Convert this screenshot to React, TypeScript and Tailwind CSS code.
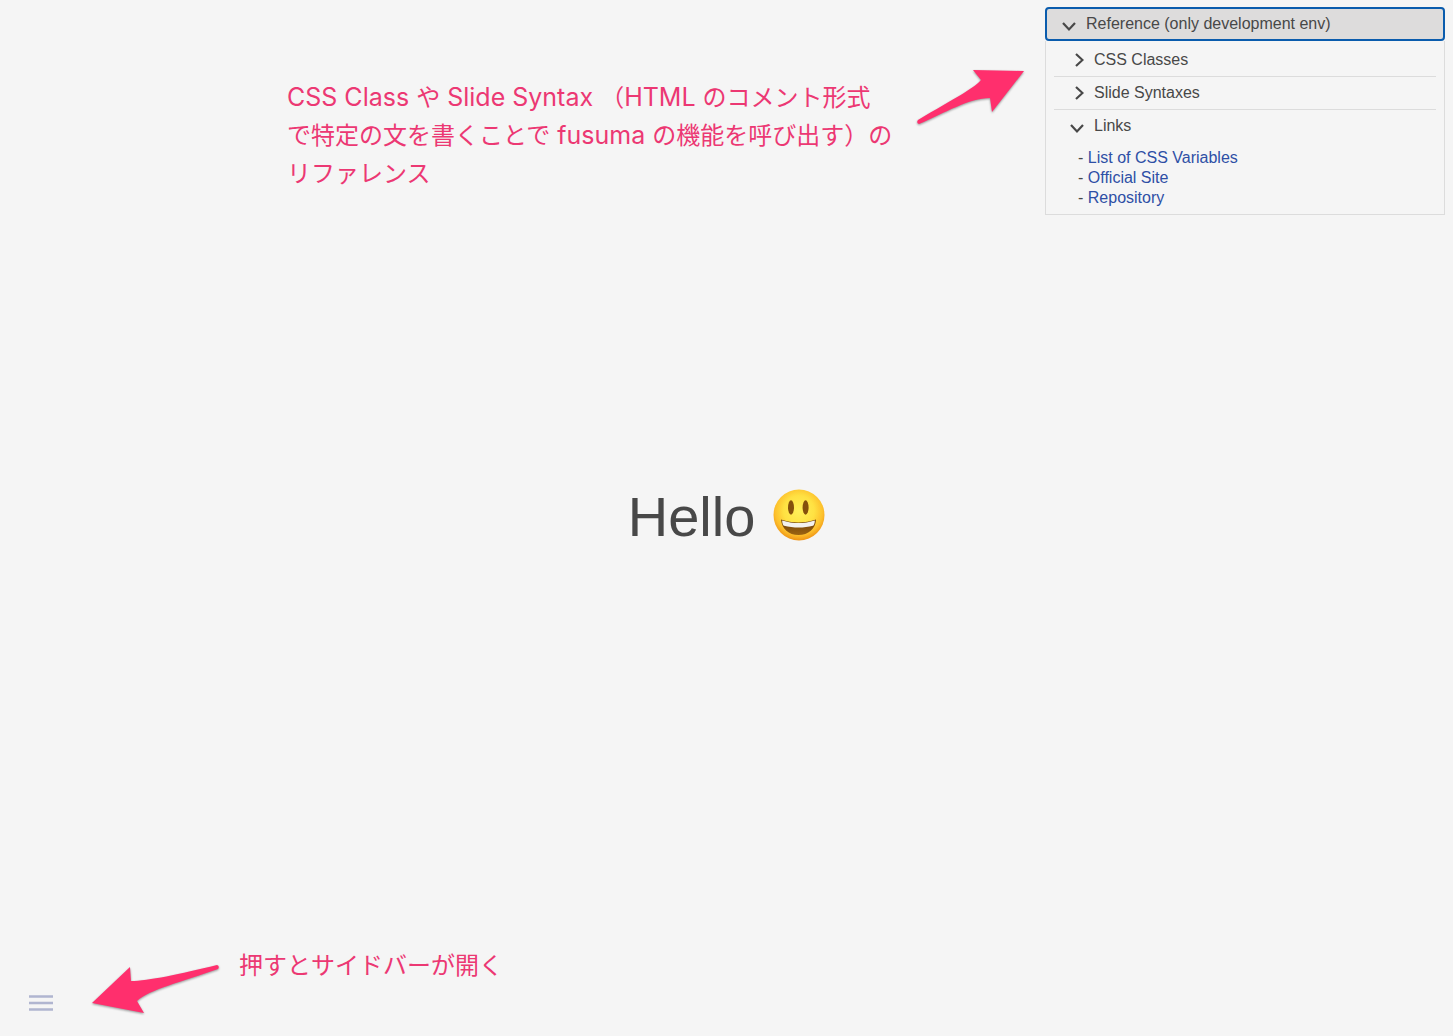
import { useState } from "react";
import type { ReactNode } from "react";

function Chevron({ open }: { open: boolean }) {
  return open ? (
    <svg viewBox="0 0 14 14" className="mt-1 size-3.5 shrink-0" fill="none" stroke="currentColor" strokeWidth="2.2" aria-hidden="true">
      <path d="M1 4L7 10.500L13 4" />
    </svg>
  ) : (
    <svg viewBox="0 0 14 14" className="size-3.5 shrink-0" fill="none" stroke="currentColor" strokeWidth="2.2" aria-hidden="true">
      <path d="M6 1L12.500 7L6 13" />
    </svg>
  );
}

function Section({ title, children }: { title: string; children?: ReactNode }) {
  const [open, setOpen] = useState(Boolean(children));
  return (
    <li className="border-b border-[#dcdcdc] last:border-b-0">
      <button
        type="button"
        aria-expanded={open}
        onClick={() => setOpen(!open)}
        className="flex h-8 w-full items-center gap-2.5 pl-4 text-left"
      >
        <Chevron open={open} />
        {title}
      </button>
      {open && children}
    </li>
  );
}

const links = [
  { label: "List of CSS Variables", href: "#css-variables" },
  { label: "Official Site", href: "#official-site" },
  { label: "Repository", href: "#repository" },
];

function ReferencePanel() {
  const [open, setOpen] = useState(true);
  return (
    <aside className="absolute top-[7px] right-2 w-[400px] text-base leading-5">
      <button
        type="button"
        aria-expanded={open}
        onClick={() => setOpen(!open)}
        className="flex h-[34px] w-full items-center gap-2.5 rounded border-2 border-[#0a5cad] bg-[#dddcdc] pl-[15px] text-left"
      >
        <Chevron open={open} />
        Reference (only development env)
      </button>
      {open && (
        <div className="border border-t-0 border-[#dcdcdc] px-2 pt-[3px] pb-1.5">
          <ul>
            <Section title="CSS Classes" />
            <Section title="Slide Syntaxes" />
            <Section title="Links">
              <ul className="pt-1.5 pl-6">
                {links.map((link) => (
                  <li key={link.label}>
                    -{" "}
                    <a href={link.href} className="text-[#2e4fa5]">
                      {link.label}
                    </a>
                  </li>
                ))}
              </ul>
            </Section>
          </ul>
        </div>
      )}
    </aside>
  );
}

function Latin({ children }: { children: ReactNode }) {
  return <span className="text-[25px] leading-none">{children}</span>;
}

function Smiley() {
  return (
    <svg viewBox="0 0 52 52" className="mb-1 size-[52px]" role="img" aria-label="Smiling face">
      <defs>
        <radialGradient id="face" cx="0.5" cy="0.42" r="0.6">
          <stop offset="0" stopColor="#fff05a" />
          <stop offset="0.5" stopColor="#ffe142" />
          <stop offset="0.78" stopColor="#fdc02c" />
          <stop offset="1" stopColor="#ec8b10" />
        </radialGradient>
        <linearGradient id="mouth" x1="0" y1="0" x2="0" y2="1">
          <stop offset="0" stopColor="#6b3d08" />
          <stop offset="1" stopColor="#9c6412" />
        </linearGradient>
      </defs>
      <circle cx="26" cy="26" r="25.5" fill="url(#face)" />
      <ellipse cx="18" cy="18.5" rx="3" ry="7.2" fill="#85500c" />
      <ellipse cx="32.6" cy="18.5" rx="3" ry="7.2" fill="#85500c" />
      <path d="M8 30.500C19 34.500 32 34.500 43 30.500C42.500 40 35.500 46 25.500 46S9 40 8 30.500Z" fill="url(#mouth)" />
      <path d="M9.100 31.400C20 34.800 31 34.800 41.900 31.400C41.700 34.500 41 36.100 40 36.800C31 39.200 20.500 39.200 11 36.800C10 36.100 9.300 34.500 9.100 31.400Z" fill="#f3f1ee" />
    </svg>
  );
}

export default function App() {
  return (
    <div className="relative flex min-h-screen items-center justify-center bg-[#f5f5f5] font-['Liberation_Sans',sans-serif] text-[#484848]">
      <ReferencePanel />

      <p className="absolute top-[79px] left-[287px] font-['Inter','Noto_Sans_CJK_JP',sans-serif] text-2xl leading-[38px] whitespace-nowrap text-[#ec3873]">
        <Latin>CSS Class </Latin>や<Latin> Slide Syntax </Latin>（<Latin>HTML </Latin>のコメント形式
        <br />
        で特定の文を書くことで<Latin> fusuma </Latin>の機能を呼び出す）の
        <br />
        リファレンス
      </p>
      <svg viewBox="0 0 112 60" className="absolute top-[67px] left-[915px] h-[60px] w-28 drop-shadow-[0_1px_1px_rgb(0_0_0/0.4)]" aria-hidden="true">
        <path d="M109 4L58 3L66 13C58 22 40 31 3 53Q1 56 4 57C30 46 54 31 75 31L77 45Z" fill="#ff2f6d" />
      </svg>

      <main className="pb-0.5">
        <h1 className="flex items-center gap-[18px] text-[56px] leading-[68px]">
          Hello <Smiley />
        </h1>
      </main>

      <p className="absolute bottom-[51px] left-[239px] font-['Inter','Noto_Sans_CJK_JP',sans-serif] text-2xl leading-[38px] whitespace-nowrap text-[#ec3873]">
        押すとサイドバーが開く
      </p>
      <svg viewBox="0 0 132 54" className="absolute bottom-5 left-[90px] h-[54px] w-[132px] drop-shadow-[0_1px_1px_rgb(0_0_0/0.4)]" aria-hidden="true">
        <path d="M2 41L40 5L41 19C58 19 90 12 127 3Q130 4 128 7C92 20 60 27 47 39L54 51Z" fill="#ff2f6d" />
      </svg>

      <button type="button" aria-label="Open sidebar" className="absolute bottom-6 left-7 text-[#b0b5d0]">
        <svg viewBox="0 0 26 18" className="h-[18px] w-[26px]" fill="none" stroke="currentColor" strokeWidth="2.6" aria-hidden="true">
          <path d="M1 2.500H25M1 9H25M1 15.500H25" />
        </svg>
      </button>
    </div>
  );
}
